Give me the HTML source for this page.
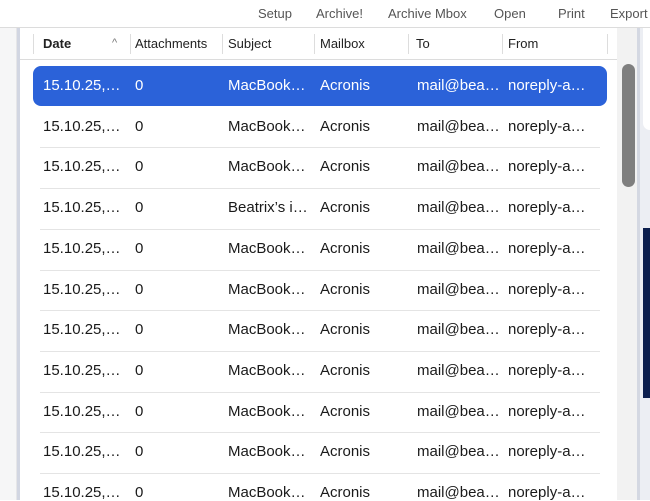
<html><head><style>
body{margin:0;width:650px;height:500px;overflow:hidden;background:#fff;font-family:"Liberation Sans",sans-serif;position:relative}
.a{position:absolute}
.tb{top:6px;font-size:13px;color:#555}
.h{top:36px;font-size:13px;color:#222}
.r{font-size:15px;color:#1a1a1a;white-space:nowrap}
.dv{top:34px;width:1px;height:20px;background:#ddd}
.sep{left:40px;width:560px;height:1px;background:#e4e4e4}
</style></head><body>
<div class="a" style="left:0;top:0;width:650px;height:27px;background:#fff;border-bottom:1px solid #dcdcdc"></div>
<div class="a tb" style="left:258px">Setup</div>
<div class="a tb" style="left:316px">Archive!</div>
<div class="a tb" style="left:388px">Archive Mbox</div>
<div class="a tb" style="left:494px">Open</div>
<div class="a tb" style="left:558px">Print</div>
<div class="a tb" style="left:610px">Export</div>
<div class="a" style="left:0;top:28px;width:16px;height:472px;background:#f6f6f7;border-right:1px solid #e6e6e8"></div>
<div class="a" style="left:17px;top:28px;width:3px;height:472px;background:#d2d6e2"></div>
<div class="a" style="left:617px;top:28px;width:20px;height:472px;background:#f2f2f2"></div>
<div class="a" style="left:622px;top:64px;width:13px;height:123px;background:#7f7f7f;border-radius:7px"></div>
<div class="a" style="left:637px;top:28px;width:3px;height:472px;background:#d4d8e2"></div>
<div class="a" style="left:640px;top:28px;width:10px;height:472px;background:#eceef3"></div>
<div class="a" style="left:643px;top:28px;width:7px;height:102px;background:#fff;border-radius:0 0 0 8px"></div>
<div class="a" style="left:643px;top:228px;width:7px;height:170px;background:#0c1f4e"></div>
<div class="a" style="left:20px;top:59px;width:597px;height:1px;background:#dcdcdc"></div>
<div class="a dv" style="left:33px"></div><div class="a dv" style="left:130px"></div><div class="a dv" style="left:222px"></div><div class="a dv" style="left:314px"></div><div class="a dv" style="left:408px"></div><div class="a dv" style="left:502px"></div><div class="a dv" style="left:607px"></div>
<div class="a h" style="left:43px;font-weight:bold">Date</div>
<div class="a h" style="left:112px;color:#777;font-size:11px;top:37px">^</div>
<div class="a h" style="left:135px">Attachments</div>
<div class="a h" style="left:228px">Subject</div>
<div class="a h" style="left:320px">Mailbox</div>
<div class="a h" style="left:416px">To</div>
<div class="a h" style="left:508px">From</div>
<div class="a" style="left:33px;top:66px;width:574px;height:40px;background:#2b62d9;border-radius:8px"></div>
<div id="rows"></div>
<script>
var s=["MacBook…","MacBook…","MacBook…","Beatrix’s i…","MacBook…","MacBook…","MacBook…","MacBook…","MacBook…","MacBook…","MacBook…"],h="";
for(var i=0;i<11;i++){var y=Math.round(77+i*40.7),c=i==0?"color:#fff;":"";
if(i>1)h+='<div class="a sep" style="top:'+(y-11)+'px"></div>';
var xs=[43,135,228,320,417,508],t=["15.10.25,…","0",s[i],"Acronis","mail@bea…","noreply-a…"];
for(var j=0;j<6;j++)h+='<div class="a r" style="'+c+'left:'+xs[j]+'px;top:'+y+'px">'+t[j]+'</div>';}
document.getElementById("rows").innerHTML=h;
</script>
</body></html>
